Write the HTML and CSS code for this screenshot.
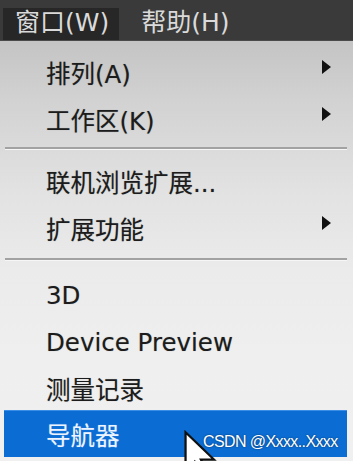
FILE: index.html
```html
<!DOCTYPE html>
<html lang="zh-CN">
<head>
<meta charset="utf-8">
<title>窗口菜单</title>
<link rel="stylesheet" href="styles.css">
</head>
<body>
<div class="screen">
  <div class="menubar">
    <div class="mb-item active">窗口(W)</div>
    <div class="mb-item">帮助(H)</div>
  </div>
  <div class="menu">
    <div class="item"><span class="label">排列(A)</span><span class="sub"></span></div>
    <div class="item"><span class="label">工作区(K)</span><span class="sub"></span></div>
    <div class="sep sep1"></div>
    <div class="item"><span class="label">联机浏览扩展...</span></div>
    <div class="item"><span class="label">扩展功能</span><span class="sub"></span></div>
    <div class="sep sep2"></div>
    <div class="item"><span class="label">3D</span></div>
    <div class="item"><span class="label">Device Preview</span></div>
    <div class="item short"><span class="label">测量记录</span></div>
    <div class="item selected"><span class="label">导航器</span></div>
  </div>
  <svg class="cursor" width="46" height="50" viewBox="0 0 40 44">
    <path d="M2 2 L2 36 L10 28 L15.5 40 L21 37.5 L15.5 26 L27 26 Z" fill="#ffffff" stroke="#111111" stroke-width="2" stroke-linejoin="miter"/>
  </svg>
  <div class="watermark">CSDN @Xxxx..Xxxx</div>
</div>
</body>
</html>
```

FILE: styles.css
```css
* { box-sizing: border-box; }
html, body {
  margin: 0;
  padding: 0;
  width: 353px;
  height: 461px;
  overflow: hidden;
}
body {
  font-family: "DejaVu Sans", "Noto Sans CJK SC", sans-serif;
  background: #eeeeee;
}
.screen {
  position: relative;
  width: 353px;
  height: 461px;
  overflow: hidden;
  display: flex;
  flex-direction: column;
}
.menubar {
  height: 41px;
  flex: none;
  background: #3a3a3a;
  display: flex;
  align-items: flex-start;
  gap: 10px;
  padding: 8px 0 0 3px;
  border-bottom: 1px solid #4a4a4a;
}
.mb-item {
  height: 32px;
  line-height: 30px;
  padding: 0 10px 0 12px;
  font-size: 25px;
  color: #dadada;
}
.mb-item.active {
  background: #272727;
}
.menu {
  flex: 1;
  padding: 8px 6px 0 4px;
  background: linear-gradient(to bottom, #c4c4c4 0px, #d2d2d2 60px, #e2e2e2 150px, #ebebeb 230px, #efefef 320px, #f0f0f0 420px);
  display: flex;
  flex-direction: column;
}
.item {
  height: 47px;
  flex: none;
  display: flex;
  align-items: center;
  padding: 0 16px 0 42px;
  font-size: 24.5px;
  color: #1c1c1c;
  text-shadow: 0 0 1px rgba(0, 0, 0, 0.3);
}
.item.short {
  height: 44px;
}
.item.selected {
  background: #0b6dd4;
  border-top: 1px solid #3b8ee6;
  color: #eef4ff;
  text-shadow: 0 0 1px rgba(255, 255, 255, 0.3);
}
.label {
  white-space: nowrap;
}
.sub {
  margin-left: auto;
  align-self: flex-start;
  margin-top: 11px;
  width: 0;
  height: 0;
  border-left: 9px solid #111111;
  border-top: 7px solid transparent;
  border-bottom: 7px solid transparent;
}
.sep {
  flex: none;
  height: 2px;
  margin-left: 1px;
  margin-right: 0;
  background: #a2a2a2;
  box-shadow: 0 1px 0 #f6f6f6;
}
.sep1 {
  margin-top: 4px;
  margin-bottom: 9px;
}
.sep2 {
  margin-top: 6px;
  margin-bottom: 12px;
}
.cursor {
  position: absolute;
  left: 183px;
  top: 430px;
}
.watermark {
  position: absolute;
  left: 203px;
  top: 433px;
  font-family: "Liberation Sans", Arial, sans-serif;
  font-size: 16px;
  letter-spacing: -0.6px;
  color: #ffffff;
  text-shadow: 0 0 2px rgba(0, 0, 0, 0.6);
  white-space: nowrap;
}
```
